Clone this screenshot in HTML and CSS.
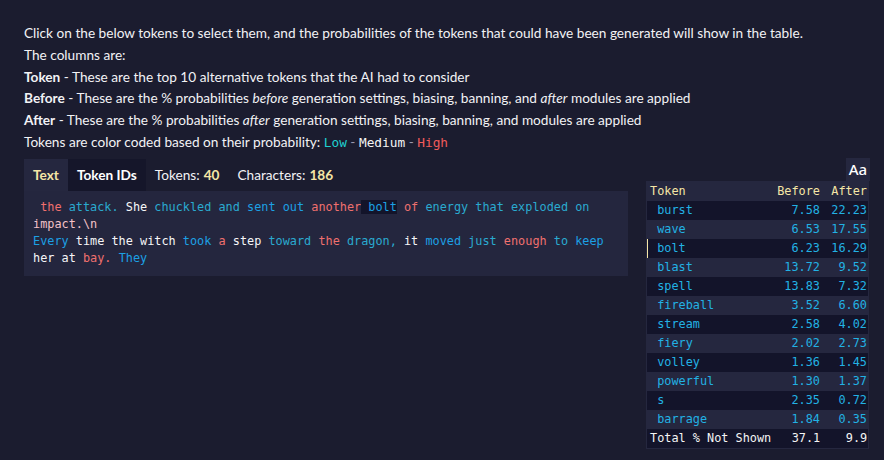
FILE: index.html
```html
<!DOCTYPE html>
<html>
<head>
<meta charset="utf-8">
<link rel="stylesheet" href="styles.css">
</head>
<body>
<div class="page">
  <div class="intro">
    <div>Click on the below tokens to select them, and the probabilities of the tokens that could have been generated will show in the table.</div>
    <div>The columns are:</div>
    <div><b>Token</b> - These are the top 10 alternative tokens that the AI had to consider</div>
    <div><b>Before</b> - These are the % probabilities <i>before</i> generation settings, biasing, banning, and <i>after</i> modules are applied</div>
    <div><b>After</b> - These are the % probabilities <i>after</i> generation settings, biasing, banning, and modules are applied</div>
    <div>Tokens are color coded based on their probability: <code class="low">Low</code> <span class="sep">-</span> <code class="med">Medium</code> <span class="sep">-</span> <code class="high">High</code></div>
  </div>
  <div class="main">
    <div class="left">
      <div class="tabs">
        <div class="tab active">Text</div>
        <div class="tab dark">Token IDs</div>
        <div class="tab info">Tokens: <b>40</b></div>
        <div class="tab info">Characters: <b>186</b></div>
      </div>
      <div class="panel"> <span class="r">the</span> <span class="t">attack.</span> <span class="w">She</span> <span class="t">chuckled</span> <span class="t">and</span> <span class="b">sent</span> <span class="b">out</span> <span class="r">another</span><span class="b sel"> bolt</span> <span class="r">of</span> <span class="t">energy</span> <span class="t">that</span> <span class="t">exploded</span> <span class="t">on</span> <span class="p">impact.\n</span><br><span class="b">Every</span> <span class="w">time</span> <span class="w">the</span> <span class="w">witch</span> <span class="b">took</span> <span class="r">a</span> <span class="w">step</span> <span class="t">toward</span> <span class="r">the</span> <span class="t">dragon,</span> <span class="w">it</span> <span class="b">moved</span> <span class="t">just</span> <span class="r">enough</span> <span class="t">to</span> <span class="b">keep</span> <span class="w">her</span> <span class="w">at</span> <span class="r">bay.</span> <span class="b">They</span></div>
    </div>
    <div class="right">
      <div class="aa-row"><div class="aa">Aa</div></div>
      <div class="table">
        <div class="row head"><span class="tok">Token</span><span class="num">Before</span><span class="num">After</span></div>
        <div class="row"><span class="tok"> burst</span><span class="num">7.58</span><span class="num">22.23</span></div>
        <div class="row"><span class="tok"> wave</span><span class="num">6.53</span><span class="num">17.55</span></div>
        <div class="row cur"><span class="tok"> bolt</span><span class="num">6.23</span><span class="num">16.29</span></div>
        <div class="row"><span class="tok"> blast</span><span class="num">13.72</span><span class="num">9.52</span></div>
        <div class="row"><span class="tok"> spell</span><span class="num">13.83</span><span class="num">7.32</span></div>
        <div class="row"><span class="tok"> fireball</span><span class="num">3.52</span><span class="num">6.60</span></div>
        <div class="row"><span class="tok"> stream</span><span class="num">2.58</span><span class="num">4.02</span></div>
        <div class="row"><span class="tok"> fiery</span><span class="num">2.02</span><span class="num">2.73</span></div>
        <div class="row"><span class="tok"> volley</span><span class="num">1.36</span><span class="num">1.45</span></div>
        <div class="row"><span class="tok"> powerful</span><span class="num">1.30</span><span class="num">1.37</span></div>
        <div class="row"><span class="tok"> s</span><span class="num">2.35</span><span class="num">0.72</span></div>
        <div class="row"><span class="tok"> barrage</span><span class="num">1.84</span><span class="num">0.35</span></div>
        <div class="row total"><span class="tok">Total % Not Shown</span><span class="num">37.1</span><span class="num">9.9</span></div>
      </div>
    </div>
  </div>
</div>
</body>
</html>
```

FILE: styles.css
```css
html, body {
  margin: 0;
  padding: 0;
  background: #1b1c2f;
  height: 100%;
  overflow: hidden;
}
.page {
  padding: 23px 15px 0 24px;
  font-family: Lato, "Open Sans", sans-serif;
  font-size: 13.65px;
  color: #f2f2f5;
}
.intro {
  line-height: 21.8px;
}
.intro b { font-weight: 700; }
.intro code {
  font-family: "DejaVu Sans Mono", monospace;
  font-size: 12.8px;
}
.low { color: #1fd0d0; }
.med { color: #f4f4f4; }
.high { color: #f05b5b; }
.sep { color: #9a9aae; }

.main {
  display: flex;
  gap: 18px;
  margin-top: 4px;
  align-items: flex-start;
}
.left {
  width: 604px;
  margin-top: 1px;
}
.tabs {
  display: flex;
  height: 32px;
  align-items: stretch;
}
.tab {
  display: flex;
  align-items: center;
  padding: 0 9px;
  font-size: 13.65px;
}
.tab.active {
  background: #25273f;
  color: #f5e6a6;
  font-weight: 700;
}
.tab.dark {
  background: #15162a;
  color: #ffffff;
  font-weight: 700;
}
.tab.info b { color: #f5e6a6; margin-left: 4px; }
.panel {
  background: #24263e;
  padding: 8px 9px 9px 9px;
  height: 68px;
  font-family: "DejaVu Sans Mono", monospace;
  font-size: 11.85px;
  line-height: 17px;
  white-space: pre-wrap;
}
.r { color: #f0706e; }
.t { color: #2aaad0; }
.b { color: #1ca0e4; }
.w { color: #f6f6f8; }
.p { color: #f3c2c8; }
.sel { background: #13142a; }

.right {
  width: 223px;
  display: flex;
  flex-direction: column;
}
.aa-row {
  display: flex;
  justify-content: flex-end;
}
.aa {
  background: #25273f;
  width: 24px;
  height: 23px;
  display: flex;
  align-items: center;
  justify-content: center;
  font-family: "Noto Sans", sans-serif;
  font-size: 15px;
  font-weight: 500;
  color: #ffffff;
  margin-right: -1px;
}
.table {
  background: #25273f;
  padding: 0 1px 1px 1px;
  font-family: "DejaVu Sans Mono", monospace;
  font-size: 11.85px;
}
.row {
  display: grid;
  grid-template-columns: 1fr 50px 47px;
  height: 19px;
  align-items: center;
  color: #22b2e4;
  white-space: pre;
}
.row:nth-child(even) { background: #13142a; }
.row.head {
  background: #25273f;
  color: #f5e6a6;
  height: 20px;
  margin: 0 -1px;
  padding: 0 1px;
}
.tok { padding-left: 3px; }
.num { text-align: right; padding-right: 1px; }
.row.cur { box-shadow: inset 1px 0 0 #f5e6a6; }
.row.total {
  color: #f4f4f4;
  background: #13142a;
}
```
